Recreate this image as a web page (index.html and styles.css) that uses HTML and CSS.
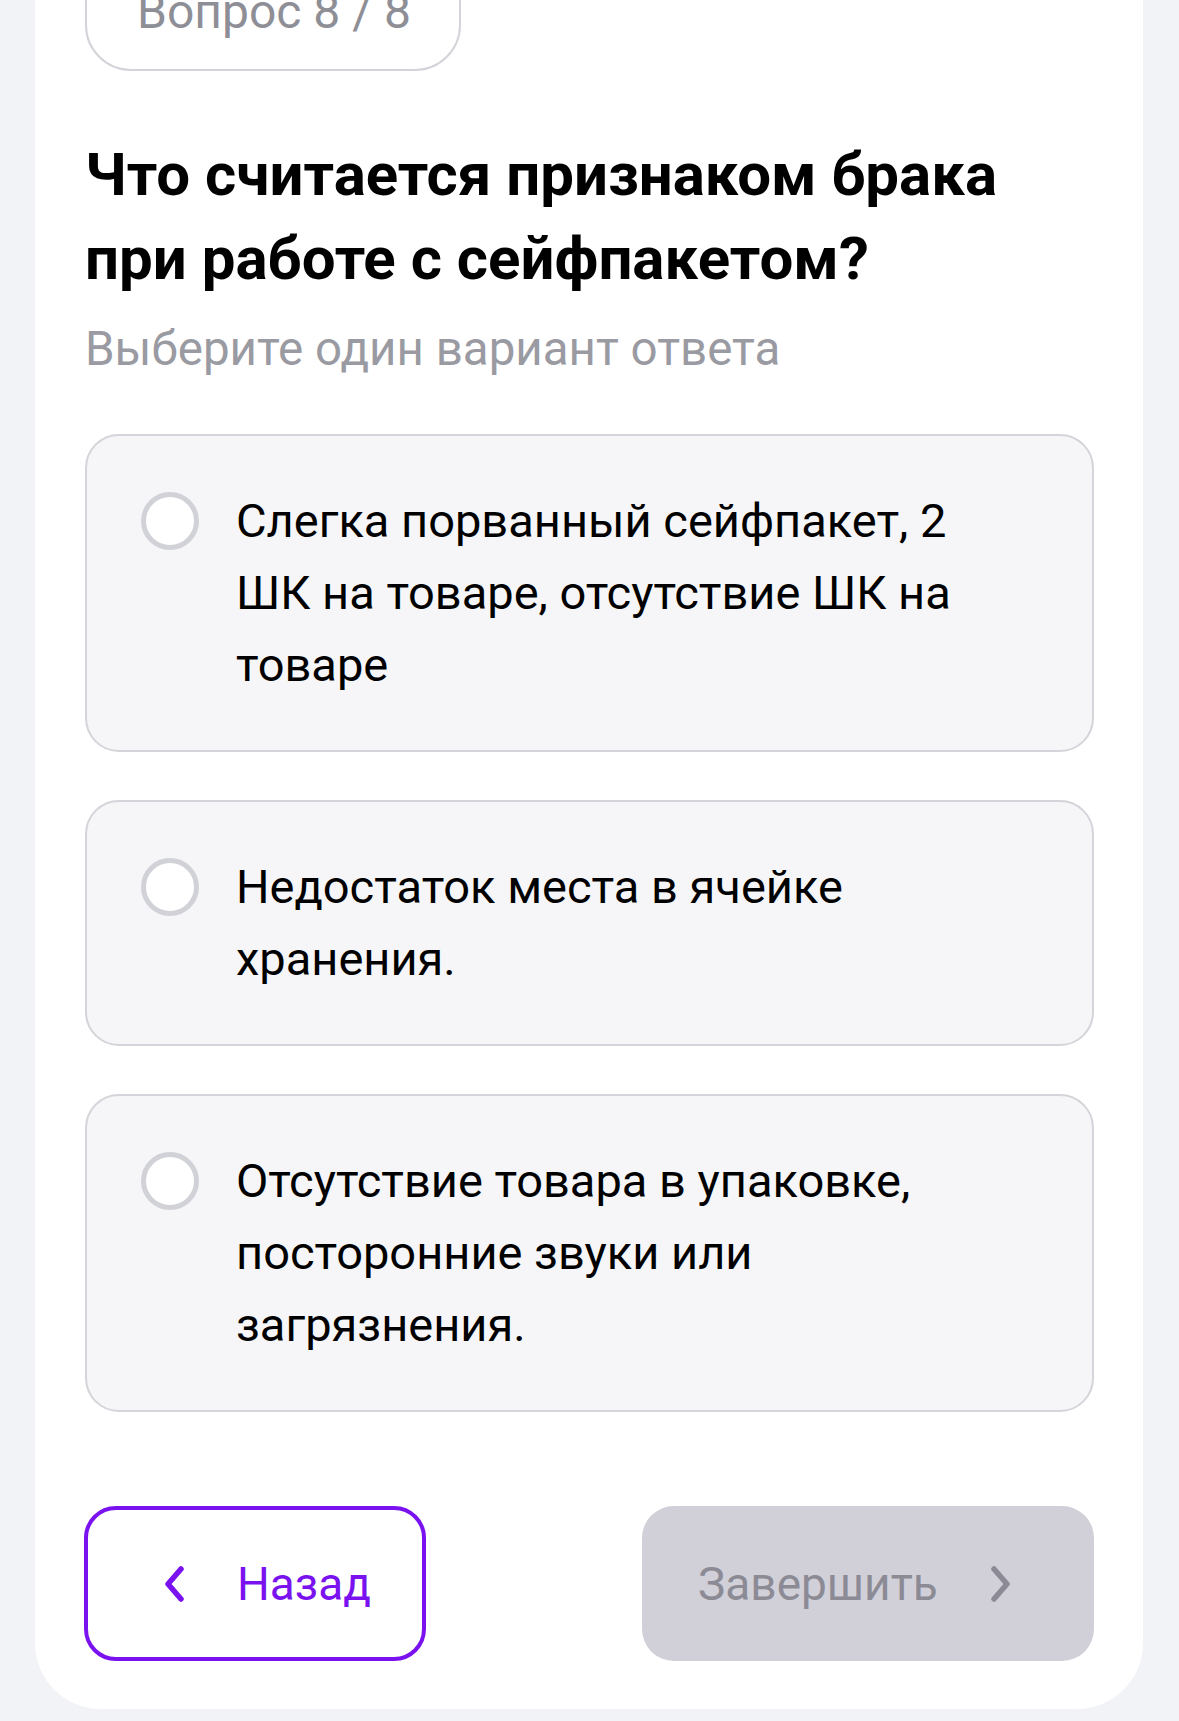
FILE: index.html
```html
<!DOCTYPE html>
<html>
<head lang="ru">
    <meta charset="UTF-8">
    <title>Вопрос 8 / 8</title>
    <link rel="stylesheet" href="styles.css">
</head>
<body>
<div class="quiz">
    <div class="quiz-step">Вопрос 8 / 8</div>
    <h1 class="quiz-title">Что считается признаком брака при работе с сейфпакетом?</h1>
    <p class="quiz-hint">Выберите один вариант ответа</p>

    <div class="answers">
        <label class="answer">
            <span class="answer-radio"></span>
            <span class="answer-text">Слегка порванный сейфпакет, 2 ШК на товаре, отсутствие ШК на товаре</span>
        </label>
        <label class="answer">
            <span class="answer-radio"></span>
            <span class="answer-text">Недостаток места в ячейке хранения.</span>
        </label>
        <label class="answer">
            <span class="answer-radio"></span>
            <span class="answer-text">Отсутствие товара в упаковке, посторонние звуки или загрязнения.</span>
        </label>
    </div>

    <div class="quiz-nav">
        <a class="btn btn-back" href="javascript:void(0)">
            <svg class="btn-icon" width="22" height="36" viewBox="0 0 22 36"><path d="M18 3 L5 18 L18 33" fill="none" stroke="currentColor" stroke-width="5.5" stroke-linecap="round" stroke-linejoin="round"/></svg>
            <span>Назад</span>
        </a>
        <a class="btn btn-finish" href="javascript:void(0)">
            <span>Завершить</span>
            <svg class="btn-icon" width="22" height="36" viewBox="0 0 22 36"><path d="M4 3 L17 18 L4 33" fill="none" stroke="currentColor" stroke-width="5.5" stroke-linecap="round" stroke-linejoin="round"/></svg>
        </a>
    </div>
</div>
</body>
</html>
```

FILE: styles.css
```css
html, body {
    margin: 0;
    padding: 0;
}
body {
    background: #f2f3f7;
    font-family: Roboto, "Noto Sans", sans-serif;
    color: #000;
    overflow: hidden;
}
.quiz {
    background: #fff;
    margin: 0 36px 0 35px;
    padding: 0 49px 48px 50px;
    border-radius: 0 0 66px 66px;
}
.quiz-step {
    display: inline-block;
    margin-top: -47px;
    padding: 29px 48px 29px 50px;
    border: 2px solid #d3d3d9;
    border-radius: 46px;
    color: #8e8e96;
    font-size: 48px;
    line-height: 56px;
}
.quiz-title {
    margin: 62px 0 0;
    font-size: 60px;
    line-height: 84px;
    font-weight: 700;
}
.quiz-hint {
    margin: 20px 0 0;
    color: #9a9aa2;
    font-size: 47.5px;
    line-height: 56px;
}
.answers {
    display: flex;
    flex-direction: column;
    gap: 48px;
    margin-top: 57px;
}
.answer {
    display: flex;
    align-items: flex-start;
    gap: 37px;
    padding: 49px 105px 49px 54px;
    background: #f6f6f8;
    border: 2px solid #d4d4da;
    border-radius: 34px;
    cursor: pointer;
}
.answer-radio {
    flex: none;
    box-sizing: border-box;
    width: 58px;
    height: 58px;
    margin-top: 7px;
    border: 5px solid #d1d1d8;
    border-radius: 50%;
    background: #fff;
}
.answer-text {
    font-size: 47px;
    line-height: 72px;
}
.quiz-nav {
    display: flex;
    justify-content: space-between;
    margin-top: 94px;
}
.btn {
    box-sizing: border-box;
    display: flex;
    align-items: center;
    height: 155px;
    border-radius: 32px;
    font-size: 46px;
    text-decoration: none;
}
.btn-back {
    width: 342px;
    margin-left: -1px;
    padding-left: 75px;
    gap: 52px;
    border: 4px solid #7a12f0;
    color: #7a12f0;
}
.btn-finish {
    width: 452px;
    padding-left: 56px;
    gap: 52px;
    background: #d1d0d9;
    color: #8c8b95;
}
.btn-icon {
    display: block;
}
```
